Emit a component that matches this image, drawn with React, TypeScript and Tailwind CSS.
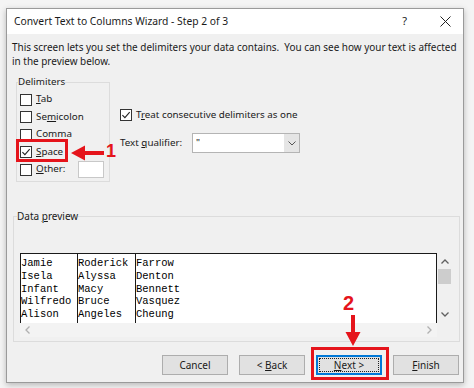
import React from 'react'

const rows = [
  ['Jamie', 'Roderick', 'Farrow'],
  ['Isela', 'Alyssa', 'Denton'],
  ['Infant', 'Macy', 'Bennett'],
  ['Wilfredo', 'Bruce', 'Vasquez'],
  ['Alison', 'Angeles', 'Cheung'],
]

function Check({ checked }: { checked?: boolean }) {
  return (
    <span className="w-[12px] h-[12px] border border-[#333333] bg-white flex items-center justify-center shrink-0">
      {checked && (
        <svg width="10" height="10" viewBox="0 0 10 10">
          <path d="M1.4 5.1 L3.9 7.6 L8.7 2.2" fill="none" stroke="#222" strokeWidth="1.1" />
        </svg>
      )}
    </span>
  )
}

function Option({ label, checked }: { label: React.ReactNode; checked?: boolean }) {
  return (
    <div className="h-[17.5px] flex items-center gap-[4px]">
      <Check checked={checked} />
      <span>{label}</span>
    </div>
  )
}

function Btn({ children, primary }: { children: React.ReactNode; primary?: boolean }) {
  return (
    <div
      className={
        primary
          ? 'w-[66px] h-[20px] border-2 border-[#0078d7] bg-[#e1e1e1] p-[1px]'
          : 'w-[66px] h-[20px] border border-[#adadad] bg-[#e1e1e1] flex items-center justify-center'
      }
    >
      {primary ? (
        <div className="w-full h-full border border-dotted border-[#222] flex items-center justify-center">
          <span>{children}</span>
        </div>
      ) : (
        <span>{children}</span>
      )}
    </div>
  )
}

export default function App() {
  return (
    <div
      className="relative w-[474px] h-[388px] overflow-hidden bg-[#f4f4f4] pt-[8px] pl-[6px] text-[#1a1a1a]"
      style={{ fontFamily: '"Noto Sans", sans-serif' }}
    >
      <div className="w-[458px] h-[375px] border border-[#9a9a9a] bg-[#f0f0f0] shadow-[0_2px_6px_rgba(0,0,0,0.25)] flex flex-col">
        {/* Title bar */}
        <div className="h-[25px] bg-white flex items-center pl-[7px] pr-[12px] text-[10.3px]">
          <span>Convert Text to Columns Wizard - Step 2 of 3</span>
          <span className="ml-auto mr-[33px] text-[11px]">?</span>
          <svg width="11" height="11" viewBox="0 0 11 11">
            <path d="M0.5 0.5 L10.5 10.5 M10.5 0.5 L0.5 10.5" stroke="#222" strokeWidth="1" />
          </svg>
        </div>

        {/* Description */}
        <div className="pt-[6px] pl-[5px] text-[9.95px] leading-[14px]">
          <p>This screen lets you set the delimiters your data contains.&nbsp; You can see how your text is affected</p>
          <p>in the preview below.</p>
        </div>

        {/* Delimiters + options */}
        <div className="flex mt-[8px] text-[9.8px]">
          <fieldset className="ml-[9px] w-[94px] h-[106px] border border-[#dcdcdc]">
            <legend className="ml-[1px] px-0 leading-[12px]">Delimiters</legend>
            <div className="pl-[3px] pt-[3px]">
              <Option label={<><u>T</u>ab</>} />
              <Option label={<>Se<u>m</u>icolon</>} />
              <Option label={<>Comma</>} />
              <Option checked label={<><u>S</u>pace</>} />
              <div className="h-[17.5px] flex items-center gap-[4px]">
                <Check />
                <span><u>O</u>ther:</span>
                <span className="ml-[9px] w-[26px] h-[17px] bg-white border border-[#c8c8c8]" />
              </div>
            </div>
          </fieldset>

          <div className="ml-[10px] pt-[32px] flex flex-col">
            <div className="h-[14px] flex items-center gap-[4px]">
              <Check checked />
              <span>T<u>r</u>eat consecutive delimiters as one</span>
            </div>
            <div className="mt-[11px] flex items-center">
              <span className="w-[72px]">Text <u>q</u>ualifier:</span>
              <div className="w-[108px] h-[20px] bg-white border border-[#b4b4b4] flex items-center">
                <span className="pl-[3px] text-[#111]">"</span>
                <span className="ml-auto w-[15px] h-full bg-[#e5e5e5] flex items-center justify-center">
                  <svg width="8" height="5" viewBox="0 0 8 5">
                    <path d="M0.5 0.5 L4 4 L7.5 0.5" fill="none" stroke="#555" strokeWidth="1" />
                  </svg>
                </span>
              </div>
            </div>
          </div>
        </div>

        {/* Data preview */}
        <fieldset className="mt-[28px] ml-[6px] w-[447px] h-[132px] border border-[#dcdcdc] text-[10px]">
          <legend className="ml-[3px] px-0 leading-[12px]">
            Data <u>p</u>review
          </legend>
          <div className="pt-[31px] pl-[6px]">
            <div className="w-[432px] flex flex-col">
              <div className="flex h-[70px]">
                <div
                  className="w-[417px] bg-white border-t border-r border-[#1a1a1a] flex text-[10.5px] leading-[12.75px] text-black"
                  style={{ fontFamily: '"Liberation Mono", monospace' }}
                >
                  {[0, 1, 2].map((c) => (
                    <div
                      key={c}
                      className={
                        c === 0
                          ? 'w-[57px] border-l border-[#1a1a1a] pt-[3px] whitespace-pre'
                          : c === 1
                            ? 'w-[58px] border-l border-[#1a1a1a] pt-[3px] whitespace-pre'
                            : 'flex-1 border-l border-[#1a1a1a] pt-[3px] whitespace-pre'
                      }
                    >
                      {rows.map((r) => (
                        <div key={r[c]}>{r[c]}</div>
                      ))}
                    </div>
                  ))}
                </div>
                <div className="w-[15px] bg-[#f0f0f0] flex flex-col items-center">
                  <svg className="mt-[6px]" width="8" height="5" viewBox="0 0 8 5">
                    <path d="M0.5 4.5 L4 1 L7.5 4.5" fill="none" stroke="#606060" strokeWidth="1.3" />
                  </svg>
                  <div className="mt-[5px] w-[13px] h-[15px] bg-[#cdcdcd]" />
                  <svg className="mt-auto mb-[6px]" width="8" height="5" viewBox="0 0 8 5">
                    <path d="M0.5 0.5 L4 4 L7.5 0.5" fill="none" stroke="#606060" strokeWidth="1.3" />
                  </svg>
                </div>
              </div>
              <div className="h-[14px] w-[417px] bg-[#f3f3f3] flex items-center px-[5px]">
                <svg width="5" height="8" viewBox="0 0 5 8">
                  <path d="M4.5 0.5 L1 4 L4.5 7.5" fill="none" stroke="#b0b0b0" strokeWidth="1.3" />
                </svg>
                <svg className="ml-auto" width="5" height="8" viewBox="0 0 5 8">
                  <path d="M0.5 0.5 L4 4 L0.5 7.5" fill="none" stroke="#b0b0b0" strokeWidth="1.3" />
                </svg>
              </div>
            </div>
          </div>
        </fieldset>

        {/* Buttons */}
        <div className="mt-[13px] pr-[4px] flex justify-end gap-[11px] text-[10px]">
          <Btn>Cancel</Btn>
          <Btn>
            &lt; <u>B</u>ack
          </Btn>
          <Btn primary>
            <u>N</u>ext &gt;
          </Btn>
          <Btn>
            <u>F</u>inish
          </Btn>
        </div>
      </div>

      {/* Annotation 1 */}
      <div className="absolute left-[16px] top-[139px] w-[52px] h-[23px] border-[3px] border-[#e5141b]" />
      <svg className="absolute left-[70px] top-[144px]" width="36" height="18" viewBox="0 0 36 18">
        <path d="M1 9 L15 1.5 L15 7 L34 7 L34 11 L15 11 L15 16.5 Z" fill="#e5141b" />
      </svg>
      <span
        className="absolute left-[106px] top-[141px] text-[18px] leading-[20px] font-bold text-[#e5141b]"
        style={{ fontFamily: '"Liberation Sans", sans-serif' }}
      >
        1
      </span>

      {/* Annotation 2 */}
      <span
        className="absolute left-[343px] top-[293px] text-[20px] leading-[20px] font-bold text-[#e5141b]"
        style={{ fontFamily: '"Liberation Sans", sans-serif' }}
      >
        2
      </span>
      <svg className="absolute left-[345px] top-[315px]" width="16" height="32" viewBox="0 0 16 32">
        <path d="M6 0 L10 0 L10 17 L15.5 17 L8 31 L0.5 17 L6 17 Z" fill="#e5141b" />
      </svg>
      <div className="absolute left-[311px] top-[347px] w-[78px] h-[33px] border-[3px] border-[#e5141b]" />
    </div>
  )
}
